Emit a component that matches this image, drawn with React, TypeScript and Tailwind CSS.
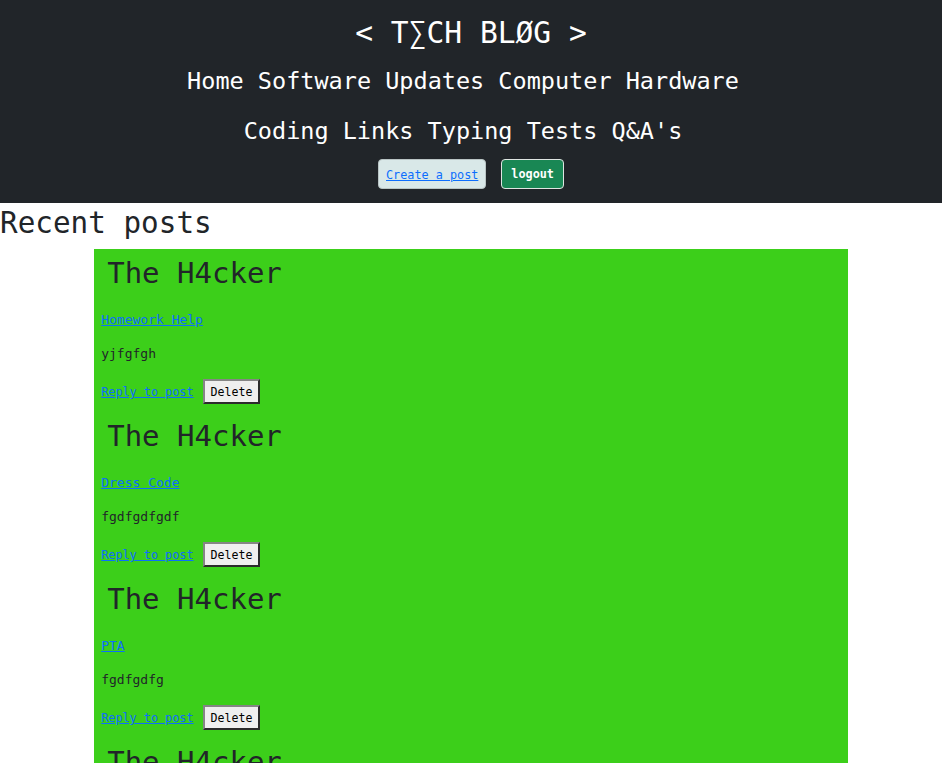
import React from "react";

const posts = [
  { title: "Homework Help", body: "yjfgfgh" },
  { title: "Dress Code", body: "fgdfgdfgdf" },
  { title: "PTA", body: "fgdfgdfg" },
  { title: "Homework Help", body: "yjfgfgh" },
];

const mono = { fontFamily: '"DejaVu Sans Mono", monospace' };

function Post({ title, body }: { title: string; body: string }) {
  return (
    <div>
      <div className="h-[48px] pl-[6px] text-[29px] leading-[48px] text-[#212529]">The H4cker</div>
      <div className="mt-[13px] h-[20px] text-[13px] leading-[20px]">
        <a href="#" className="text-[#0d6efd] underline">
          {title}
        </a>
      </div>
      <div className="mt-[14px] h-[20px] text-[13px] leading-[20px] text-[#212529]">{body}</div>
      <div className="mt-[15px] flex h-[25px] items-center gap-[9px]">
        <a href="#" className="pt-[1px] text-[11.8px] leading-[20px] text-[#0d6efd] underline">
          Reply to post
        </a>
        <button className="h-[25px] border-2 border-solid border-t-[#858585] border-l-[#858585] border-b-[#2b2b2b] border-r-[#2b2b2b] bg-[#efefef] px-[6px] pt-[1px] text-[11.6px] leading-[19px] text-black">
          Delete
        </button>
      </div>
      <div className="h-[8px]" />
    </div>
  );
}

export default function App() {
  return (
    <div style={mono} className="min-h-screen bg-white">
      <header className="bg-[#212529] pt-[13px] pb-[14px] text-white">
        <div className="h-[40px] text-center text-[29.6px] leading-[40px]">&lt; T∑CH BLØG &gt;</div>
        <nav className="mx-auto mt-[3px] max-w-[600px] -translate-x-[8px] text-center text-[23.5px] leading-[50px]">
          Home Software Updates Computer Hardware Coding Links Typing Tests Q&amp;A's
        </nav>
        <div className="mt-[3px] flex justify-center gap-[15px]">
          <a
            href="#"
            className="flex h-[30px] items-center rounded-[4px] border border-[#b9c4c4] bg-[#d9e8e8] px-[7px] pt-[3px] text-[11.8px] text-[#0d6efd] underline"
          >
            Create a post
          </a>
          <button className="flex h-[30px] items-center rounded-[4px] border border-[#dfe5e2] bg-[#198754] px-[9px] pt-[2px] text-[11.8px] font-semibold text-white">
            logout
          </button>
        </div>
      </header>
      <div className="h-[40px] text-[29.3px] leading-[40px] text-[#212529]">Recent posts</div>
      <main className="mx-auto mt-[6px] w-[80%] bg-[#3ccf1a] pl-[7px]">
        {posts.map((p, i) => (
          <Post key={i} title={p.title} body={p.body} />
        ))}
      </main>
    </div>
  );
}
